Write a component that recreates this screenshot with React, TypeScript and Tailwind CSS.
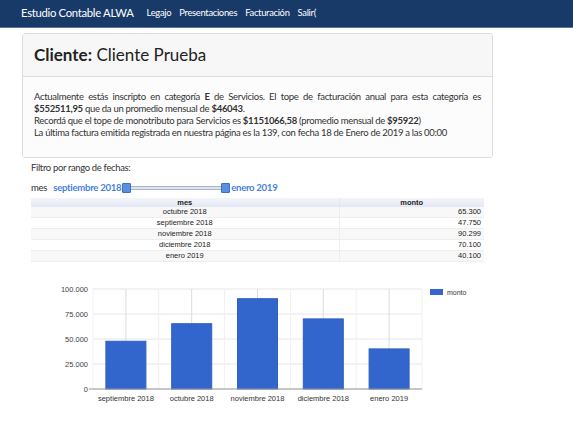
const rows = [
  { mes: "octubre 2018", monto: "65.300" },
  { mes: "septiembre 2018", monto: "47.750" },
  { mes: "noviembre 2018", monto: "90.299" },
  { mes: "diciembre 2018", monto: "70.100" },
  { mes: "enero 2019", monto: "40.100" },
];

const bars = [
  { label: "septiembre 2018", value: 47750 },
  { label: "octubre 2018", value: 65300 },
  { label: "noviembre 2018", value: 90299 },
  { label: "diciembre 2018", value: 70100 },
  { label: "enero 2019", value: 40100 },
];

function Chart() {
  // plot area in svg coords
  const left = 63;
  const top = 20;
  const w = 329;
  const h = 100;
  const step = w / bars.length;
  const ticks = [100000, 75000, 50000, 25000, 0];
  return (
    <svg width="480" height="145" className="block" style={{ fontFamily: '"Liberation Sans", Arial, sans-serif' }}>
      {ticks.map((t, i) => (
        <g key={t}>
          <line x1={left} x2={left + w} y1={top + i * 25} y2={top + i * 25} stroke="#e6e6e6" />
          <text x={left - 5} y={top + i * 25 + 3} fontSize="7.5" fill="#444" textAnchor="end">
            {t === 0 ? "0" : t.toLocaleString("de-DE")}
          </text>
        </g>
      ))}
      {bars.map((b, i) => (
        <g key={b.label}>
          <line x1={left + step * i} x2={left + step * i} y1={top} y2={top + h} stroke="#f0f0f0" />
          <line x1={left + step * i + step / 2} x2={left + step * i + step / 2} y1={top} y2={top + h} stroke="#dcdcdc" />
        </g>
      ))}
      <line x1={left + w} x2={left + w} y1={top} y2={top + h} stroke="#f0f0f0" />
      {bars.map((b, i) => {
        const bh = (b.value / 100000) * h;
        const x = left + step * i + (step - 40) / 2;
        return (
          <g key={b.label}>
            <rect x={x} y={top + h - bh} width="40" height={bh} fill="#3366cc" stroke="#2f5fbf" strokeWidth="1" />
            <text x={left + step * i + step / 2} y={top + h + 12} fontSize="7.5" fill="#333" textAnchor="middle">
              {b.label}
            </text>
          </g>
        );
      })}
      <line x1={left - 4} x2={left + w} y1={top + h} y2={top + h} stroke="#999" />
      <rect x="400" y="20" width="13" height="6" fill="#3366cc" />
      <text x="417" y="26" fontSize="7" fill="#333">monto</text>
    </svg>
  );
}

export default function App() {
  return (
    <div className="w-[573px] h-[425px] bg-white overflow-hidden" style={{ fontFamily: 'Lato, "Open Sans", sans-serif' }}>
      <nav className="h-[28px] bg-[#183a69] border-b border-[#5d7697] flex items-center pl-[21px] text-white">
        <span className="text-[11.3px] tracking-[-0.3px] mr-[13px]">Estudio Contable ALWA</span>
        <div className="flex gap-[8px] text-[9.4px] tracking-[-0.3px]">
          <span>Legajo</span>
          <span>Presentaciones</span>
          <span>Facturación</span>
          <span>Salir(</span>
        </div>
      </nav>

      <div className="ml-[22px] mt-[5px] w-[471px] border border-[#dcdcdc] rounded-[3px]">
        <div className="h-[43px] bg-[#f7f7f7] border-b border-[#dcdcdc] flex items-center px-[11px]">
          <h2 className="text-[17px] text-[#222]">
            <b className="font-bold">Cliente:</b> Cliente Prueba
          </h2>
        </div>
        <div className="px-[11px] pt-[14px] pb-[18px] text-[9.5px] tracking-[-0.3px] leading-[12px] text-[#333] bg-[#fcfcfc]">
          <p className="text-justify [text-align-last:left]">
            Actualmente estás inscripto en categoría <b>E</b> de Servicios. El tope de facturación anual para esta categoría es{" "}
            <b>$552511,95</b> que da un promedio mensual de <b>$46043</b>.
          </p>
          <p>
            Recordá que el tope de monotributo para Servicios es <b>$1151066,58</b> (promedio mensual de <b>$95922</b>)
          </p>
          <p>La última factura emitida registrada en nuestra página es la 139, con fecha 18 de Enero de 2019 a las 00:00</p>
        </div>
      </div>

      <div className="ml-[31px] mt-[3px] text-[9.4px] tracking-[-0.3px] text-[#333]">Filtro por rango de fechas:</div>

      <div className="ml-[31px] mt-[6px] flex items-center text-[9.6px] tracking-[-0.3px] h-[14px]">
        <span className="text-[#333] mr-[6px]">mes</span>
        <span className="font-bold text-[#4a80dc]">septiembre 2018</span>
        <div className="relative w-[108px] h-[10px] ml-[1px]">
          <div className="absolute left-[4px] right-[4px] top-[3px] h-[4px] bg-[#dde3ee] border border-[#a9b4c8]" />
          <div className="absolute left-0 top-0 w-[9px] h-[10px] bg-[#5a8ee0] border border-[#3f6fc0] rounded-[1px]" />
          <div className="absolute right-0 top-0 w-[9px] h-[10px] bg-[#5a8ee0] border border-[#3f6fc0] rounded-[1px]" />
        </div>
        <span className="font-bold text-[#4a80dc] ml-[1px]">enero 2019</span>
      </div>

      <table
        className="ml-[31px] mt-[3px] w-[453px] border-collapse text-[7.5px] text-[#222]"
        style={{ fontFamily: '"Liberation Sans", Arial, sans-serif' }}
      >
        <thead>
          <tr className="h-[9px] bg-gradient-to-b from-[#f4f5fb] to-[#e4e8f5]">
            <th className="font-bold w-[308px] border-r border-[#e8e8e8] leading-[9px]">mes</th>
            <th className="font-bold leading-[9px]">monto</th>
          </tr>
        </thead>
        <tbody>
          {rows.map((r, i) => (
            <tr key={r.mes} className={`h-[10px] border-b border-[#eeeeee] ${i % 2 === 0 ? "bg-[#f8f8f8]" : "bg-white"}`}>
              <td className="text-center border-r border-[#eeeeee] leading-[10px]">{r.mes}</td>
              <td className="text-right pr-[3px] leading-[10px]">{r.monto}</td>
            </tr>
          ))}
        </tbody>
      </table>

      <div className="ml-[30px] mt-[7px]">
        <Chart />
      </div>
    </div>
  );
}
